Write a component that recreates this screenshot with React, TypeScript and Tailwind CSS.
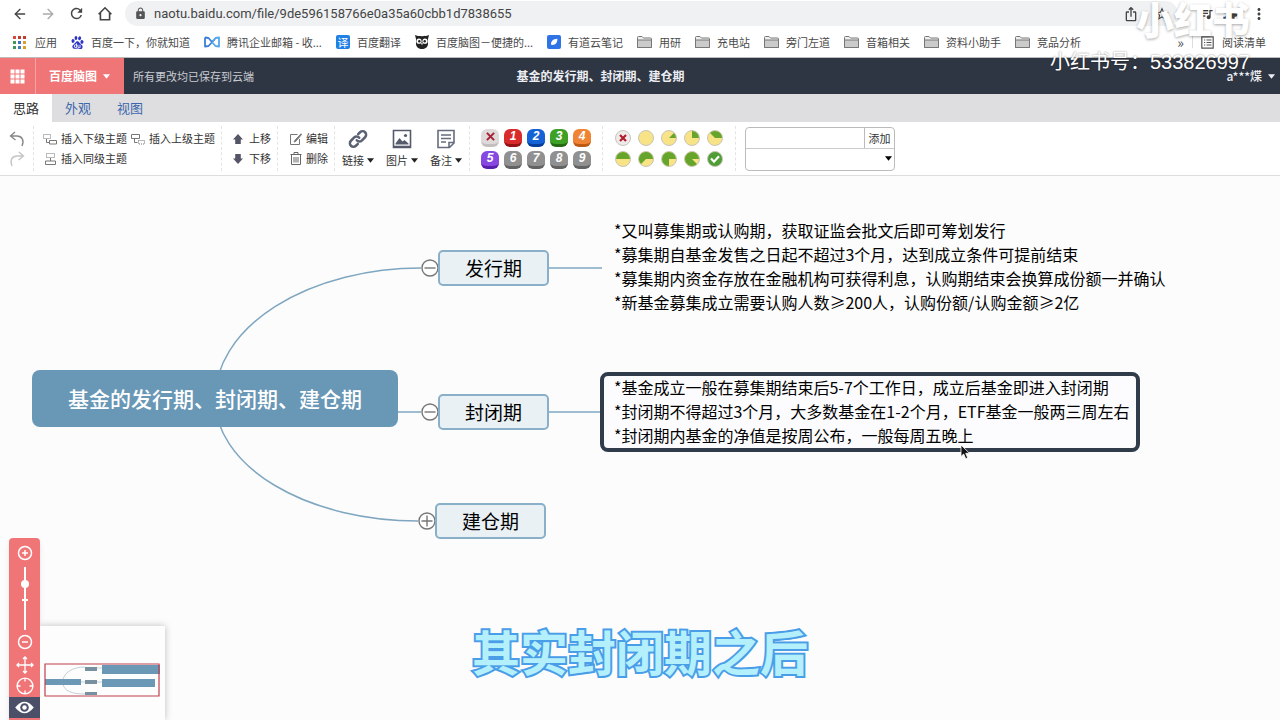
import type { ReactNode } from "react";
import { ArrowLeft, ArrowRight } from "lucide-react";
import { MdLock, MdMoreVert, MdRefresh, MdStarBorder, MdIosShare, MdQueueMusic, MdExtension } from "react-icons/md";
import { SiBaidu } from "react-icons/si";
import { clsx } from "clsx";

/* ---------- small drawings ---------- */

function Caret({ className }: { className?: string }) {
  return (
    <svg viewBox="0 0 8 5" className={clsx("w-[7px] h-[5px] shrink-0", className)} fill="currentColor">
      <path d="M0 0h8L4 5z" />
    </svg>
  );
}

function HomeIcon() {
  return (
    <svg viewBox="0 0 16 16" className="size-4" fill="none" stroke="currentColor" strokeWidth="1.6">
      <path d="M1.6 8.2 8 1.8l6.4 6.4M3.4 6.8v7h9.2v-7" />
    </svg>
  );
}

function AppsIcon() {
  const colors = ["#d9483b", "#c23b30", "#c23b30", "#3f9a55", "#3b72c8", "#d8a12c", "#3f9a55", "#3f7fb0", "#d8a12c"];
  return (
    <svg viewBox="0 0 13 13" className="size-[13px] mr-[2px]">
      {colors.map((c, i) => (
        <rect key={i} x={(i % 3) * 5} y={Math.floor(i / 3) * 5} width="3" height="3" fill={c} />
      ))}
    </svg>
  );
}

function MailIcon() {
  return (
    <svg viewBox="0 0 16 12" className="w-4 h-3" fill="none" strokeWidth="1.8" strokeLinejoin="round">
      <path d="M1 1.5v9L4.5 10 11 3" stroke="#3c7fd6" />
      <path d="M15 10.5v-9L11.5 2 8 6l3.5 4z" stroke="#56a6ea" />
      <path d="M1 1.5 4.5 2 8 6" stroke="#3c7fd6" />
    </svg>
  );
}

function OwlIcon() {
  return (
    <svg viewBox="0 0 14 14" className="size-[14px]">
      <path d="M0 0c3 1.6 11 1.6 14 0l-1 4v5c0 3-3 5-6 5s-6-2-6-5V4z" fill="#222" />
      <circle cx="4" cy="6.2" r="2.6" fill="#fff" />
      <circle cx="10" cy="6.2" r="2.6" fill="#fff" />
      <circle cx="4.3" cy="6.2" r="1.2" fill="#222" />
      <circle cx="9.7" cy="6.2" r="1.2" fill="#222" />
      <path d="M6 8h2l-1 2.6z" fill="#ddd" />
    </svg>
  );
}

function NoteIcon() {
  return (
    <svg viewBox="0 0 14 14" className="size-[14px]">
      <rect width="14" height="14" rx="2" fill="#2f74e6" />
      <path d="M4 9.8C3.6 6.5 6 4 10.4 3.8 10.4 8 8.5 10.4 4 9.8z" fill="#fff" />
    </svg>
  );
}

function FolderIcon() {
  return (
    <svg viewBox="0 0 15 12" className="w-[15px] h-3" stroke="#777" strokeWidth="1">
      <path d="M.5 11.5V1.5q0-1 1-1H5L6.500 2h7q1 0 1 1v8.500z" fill="#eee" />
      <path d="M.5 11.5V4h14v7.500z" fill="#cbcbcb" />
    </svg>
  );
}

function ListIcon() {
  return (
    <svg viewBox="0 0 13 13" className="size-[13px]" fill="none" stroke="#555" strokeWidth="1.2">
      <path d="M.8.8h11.4v11.4H.8zM3 4h1.2M5.500 4h5M3 6.500h1.200M5.500 6.500h5M3 9h1.200M5.500 9h5" />
    </svg>
  );
}

/* ---------- browser chrome ---------- */

const bookmarks: { label: string; icon: ReactNode }[] = [
  { label: "应用", icon: <AppsIcon /> },
  { label: "百度一下，你就知道", icon: <SiBaidu className="size-[13px] text-[#2d35c4]" /> },
  { label: "腾讯企业邮箱 - 收...", icon: <MailIcon /> },
  {
    label: "百度翻译",
    icon: <span className="size-[14px] rounded-xs bg-[#2080e4] text-white text-[11px] leading-[14px] text-center">译</span>,
  },
  { label: "百度脑图－便捷的...", icon: <OwlIcon /> },
  { label: "有道云笔记", icon: <NoteIcon /> },
  { label: "用研", icon: <FolderIcon /> },
  { label: "充电站", icon: <FolderIcon /> },
  { label: "旁门左道", icon: <FolderIcon /> },
  { label: "音箱相关", icon: <FolderIcon /> },
  { label: "资料小助手", icon: <FolderIcon /> },
  { label: "竞品分析", icon: <FolderIcon /> },
];

function BrowserBar() {
  return (
    <header className="bg-white">
      <div className="flex items-center h-[27px] px-3 text-[#444]">
        <div className="flex items-center gap-3 w-[113px]">
          <button aria-label="后退"><ArrowLeft className="size-4" /></button>
          <button aria-label="前进" className="text-[#aaa]"><ArrowRight className="size-4" /></button>
          <button aria-label="刷新"><MdRefresh className="size-[17px]" /></button>
          <button aria-label="主页"><HomeIcon /></button>
        </div>
        <div className="flex flex-1 items-center h-[25px] rounded-full bg-[#eff1f3] pl-[9px] pr-2 gap-[7px]">
          <MdLock className="size-[13px] text-[#555]" />
          <input
            aria-label="地址"
            defaultValue="naotu.baidu.com/file/9de596158766e0a35a60cbb1d7838655"
            className="flex-1 bg-transparent outline-none font-['Roboto'] text-[13px] text-[#444]"
          />
          <MdIosShare className="size-4" />
          <MdStarBorder className="size-4 ml-2" />
        </div>
        <MdQueueMusic className="size-4 ml-5" />
        <MdExtension className="size-4 ml-2" />
        <button aria-label="菜单" className="ml-3"><MdMoreVert className="size-[18px]" /></button>
      </div>
      <nav className="flex items-center h-[31px] pl-[13px] pr-[14px] text-[11px] text-[#4a4a4a] border-b border-[#bbb]">
        <ul className="flex items-center gap-[14px]">
          {bookmarks.map((b) => (
            <li key={b.label}>
              <a href="#" className="flex items-center gap-[7px] whitespace-nowrap">
                {b.icon}
                {b.label}
              </a>
            </li>
          ))}
        </ul>
        <button aria-label="更多书签" className="ml-auto text-[14px] leading-4">»</button>
        <span className="w-px h-3 bg-[#ddd] mx-2" />
        <button className="flex items-center gap-2 whitespace-nowrap">
          <ListIcon />
          阅读清单
        </button>
      </nav>
    </header>
  );
}

/* ---------- editor header ---------- */

function TitleBar() {
  return (
    <div className="flex items-center h-9 bg-[#2f3643] text-white">
      <div className="flex flex-1 items-center h-full">
        <button aria-label="我的文档" className="flex items-center justify-center w-[35px] h-full bg-[#f07577]">
          <svg viewBox="0 0 15 15" className="size-[15px]" fill="#fff">
            {[0, 1, 2, 3, 4, 5, 6, 7, 8].map((i) => (
              <rect key={i} x={(i % 3) * 5 + 0.5} y={Math.floor(i / 3) * 5 + 0.5} width="4" height="4" />
            ))}
          </svg>
        </button>
        <button className="flex items-center gap-[6px] h-full pl-[13px] pr-[14px] border-l border-[#f6a5a6] bg-[#f07577] text-[12px] font-bold">
          百度脑图
          <Caret className="mt-px" />
        </button>
        <span className="pl-[9px] text-[11px] text-[#c9ccd2]">所有更改均已保存到云端</span>
      </div>
      <h1 className="pr-[74px] text-[12px] font-bold text-[#eceef4]">基金的发行期、封闭期、建仓期</h1>
      <div className="flex flex-1 justify-end pr-[5px]">
        <button className="flex items-center gap-[6px] text-[12px] font-medium text-[#eceef4]">
          a***煠
          <Caret />
        </button>
      </div>
    </div>
  );
}

function Tabs() {
  return (
    <div className="flex h-7 bg-[#dedee0] text-[13px] text-[#3d66ac]">
      <button className="px-[13px] bg-white text-[#333]">思路</button>
      <button className="px-[13px]">外观</button>
      <button className="px-[13px]">视图</button>
    </div>
  );
}

/* ---------- toolbar ---------- */

function Divider() {
  return <span className="self-stretch my-1 border-l border-dashed border-[#e3e3e3]" />;
}

function ToolButton({ icon, label }: { icon: ReactNode; label: string }) {
  return (
    <button className="flex items-center gap-1 h-5 whitespace-nowrap">
      {icon}
      {label}
    </button>
  );
}

function InsertIcon({ kind }: { kind: "child" | "parent" | "sibling" }) {
  return (
    <svg viewBox="0 0 14 12" className="w-[14px] h-3 shrink-0" fill="none" stroke="#777" strokeWidth="1">
      {kind === "child" && (
        <>
          <path d="M.5 1.500h7v4h-7z" strokeDasharray="1 1" />
          <path d="M3.500 6v3.500h3M6.500 7.500h7v3.500h-7z" />
        </>
      )}
      {kind === "parent" && (
        <>
          <path d="M.5 1.500h8v4h-8zM3.500 5.500v4h3" />
          <path d="M7.500 7.500h6v3.500h-6z" strokeDasharray="1 1" />
        </>
      )}
      {kind === "sibling" && (
        <>
          <path d="M3.500.5h8v4h-8z" strokeDasharray="1 1" />
          <path d="M7.500 5v3M2.500 8h10v3.500h-10z" />
        </>
      )}
    </svg>
  );
}

function BlockArrow({ down }: { down?: boolean }) {
  return (
    <svg viewBox="0 0 10 10" className={clsx("size-[10px] mr-[2px]", down && "rotate-180")} fill="#555568">
      <path d="M5 0l5 5.500H7.800V10H2.200V5.500H0z" />
    </svg>
  );
}

function UndoArrow({ redo }: { redo?: boolean }) {
  return (
    <svg
      viewBox="0 0 16 16"
      className={clsx("size-4", redo && "-scale-x-100")}
      fill="none"
      stroke={redo ? "#c6c6c6" : "#888"}
      strokeWidth="1.4"
    >
      <path d="M6 1 1.500 5 6.500 9M1.500 5H8c5 0 7.500 4.500 5 10" />
    </svg>
  );
}

function EditIcon() {
  return (
    <svg viewBox="0 0 12 12" className="size-3" fill="none" stroke="#777" strokeWidth="1">
      <path d="M7.500 1.500h-7v10h9V6" />
      <path d="M11 .8 5 7.200 4 9l1.800-.8L11.600 1.500z" fill="#777" />
    </svg>
  );
}

function TrashIcon() {
  return (
    <svg viewBox="0 0 12 13" className="w-3 h-[13px]" fill="none" stroke="#666" strokeWidth="1">
      <path d="M.5 2.500h11M4 2.500v-2h4v2M1.500 3v9.500h9V3M4 5v5.500M6 5v5.500M8 5v5.500" />
    </svg>
  );
}

function LinkIcon() {
  return (
    <svg viewBox="0 0 24 24" className="size-5" fill="none" stroke="#5b6274" strokeWidth="3" strokeLinecap="round">
      <path d="M10.500 13.500a4 4 0 0 0 6 .4l4-4a4.200 4.200 0 0 0-6-6l-2.300 2.300" />
      <path d="M13.500 10.500a4 4 0 0 0-6-.4l-4 4a4.200 4.200 0 0 0 6 6l2.300-2.300" />
    </svg>
  );
}

function ImageIcon() {
  return (
    <svg viewBox="0 0 20 20" className="size-5" fill="none" stroke="#555b6b" strokeWidth="1.6">
      <path d="M1.500 1.500h17v17h-17z" />
      <path d="M3.500 14.500 7.500 9l3 3.500 2-1.500 4 3.500v1h-13z" fill="#555b6b" stroke="none" />
      <circle cx="13.500" cy="6.500" r="1.600" fill="#555b6b" stroke="none" />
      <path d="M1.500 17.500h17" />
    </svg>
  );
}

function MemoIcon() {
  return (
    <svg viewBox="0 0 20 20" className="size-5" fill="none" stroke="#666c7e" strokeWidth="1.6">
      <path d="M2 1.500h16V14l-4.500 4.500H2zM18 13.500h-5v5M5 6h10M5 9.500h10M5 13h5" />
    </svg>
  );
}

function MenuTool({ icon, label }: { icon: ReactNode; label: string }) {
  return (
    <button className="flex flex-col items-center w-8 gap-[3px]">
      {icon}
      <span className="flex items-center gap-[3px] leading-4 whitespace-nowrap">
        {label}
        <Caret className="text-[#222]" />
      </span>
    </button>
  );
}

const priorities = [
  { label: "×", className: "bg-[#dedada] border-[#c4bfbf] text-[#a81e34]" },
  { label: "1", className: "bg-[#d92b2b] border-[#951515] text-white" },
  { label: "2", className: "bg-[#1462d6] border-[#073d98] text-white" },
  { label: "3", className: "bg-[#3fa026] border-[#236a12] text-white" },
  { label: "4", className: "bg-[#ef8534] border-[#bb5a12] text-white" },
  { label: "5", className: "bg-[#8648e0] border-[#5820aa] text-white" },
  { label: "6", className: "bg-[#909090] border-[#636363] text-white" },
  { label: "7", className: "bg-[#909090] border-[#636363] text-white" },
  { label: "8", className: "bg-[#909090] border-[#636363] text-white" },
  { label: "9", className: "bg-[#909090] border-[#636363] text-white" },
];

function PriorityPicker() {
  return (
    <div className="grid grid-cols-5 gap-x-[5px] gap-y-1">
      {priorities.map((p, i) => (
        <button
          key={p.label}
          aria-label={i === 0 ? "移除优先级" : `优先级${i}`}
          className={clsx(
            "flex items-center justify-center size-[18px] rounded-md border-b-3 font-['Liberation_Sans'] text-[12px] font-bold italic leading-3",
            p.className
          )}
        >
          {i === 0 ? (
            <svg viewBox="0 0 10 10" className="size-[9px]" stroke="currentColor" strokeWidth="2.2">
              <path d="M1 1l8 8M9 1 1 9" />
            </svg>
          ) : (
            p.label
          )}
        </button>
      ))}
    </div>
  );
}

// green slice of step/8, always ending at three o'clock
function wedge(step: number) {
  const a = (-step * Math.PI) / 4;
  const x = 9 + 7 * Math.cos(a);
  const y = 9 + 7 * Math.sin(a);
  return `M9 9L${x} ${y}A7 7 0 ${step > 4 ? 1 : 0} 1 16 9z`;
}

function ProgressPicker() {
  return (
    <div className="grid grid-cols-5 gap-x-[5px] gap-y-[3px]">
      {[-1, 0, 1, 2, 3, 4, 5, 6, 7, 8].map((step) => (
        <button key={step} aria-label={step < 0 ? "移除进度" : `完成 ${step}/8`} className="size-[18px]">
          <svg viewBox="0 0 18 18" className="size-[18px]">
            <circle cx="9" cy="9" r="7.5" fill={step < 0 ? "#efebeb" : step === 8 ? "#4f9e35" : "#f8e386"} stroke="#c9c4b8" />
            {step > 0 && step < 8 && <path d={wedge(step)} fill="#66a52c" />}
            {step < 0 && <path d="M6 6l6 6M12 6l-6 6" stroke="#b01c2e" strokeWidth="2.2" />}
            {step === 8 && <path d="M5 8.500l3 3.200 5-5.500" fill="none" stroke="#fff" strokeWidth="2.2" />}
          </svg>
        </button>
      ))}
    </div>
  );
}

function ResourceBox() {
  return (
    <div className="w-[150px] h-11 rounded border border-[#bbb] bg-white">
      <div className="flex h-[21px] border-b border-[#ccc]">
        <input aria-label="资源标签" className="min-w-0 flex-1 px-1 outline-none" />
        <button className="w-[30px] border-l border-[#bbb] leading-4">添加</button>
      </div>
      <div className="flex items-center h-5 pr-[2px]">
        <select aria-label="已有标签" className="flex-1 appearance-none bg-transparent outline-none" />
        <Caret className="text-black" />
      </div>
    </div>
  );
}

function Toolbar() {
  return (
    <div className="flex items-center h-[54px] pl-[9px] bg-white border-b border-[#ddd] text-[11px] text-[#333]">
      <div className="flex flex-col gap-1 pr-2">
        <button aria-label="撤销"><UndoArrow /></button>
        <button aria-label="重做"><UndoArrow redo /></button>
      </div>
      <Divider />
      <div className="grid grid-cols-[auto_auto] gap-x-1 pl-[9px] pr-[6px]">
        <ToolButton icon={<InsertIcon kind="child" />} label="插入下级主题" />
        <ToolButton icon={<InsertIcon kind="parent" />} label="插入上级主题" />
        <ToolButton icon={<InsertIcon kind="sibling" />} label="插入同级主题" />
      </div>
      <Divider />
      <div className="flex flex-col pl-[11px] pr-[6px]">
        <ToolButton icon={<BlockArrow />} label="上移" />
        <ToolButton icon={<BlockArrow down />} label="下移" />
      </div>
      <Divider />
      <div className="flex flex-col pl-3 pr-[6px]">
        <ToolButton icon={<EditIcon />} label="编辑" />
        <ToolButton icon={<TrashIcon />} label="删除" />
      </div>
      <Divider />
      <div className="flex gap-3 pl-[7px] pr-[7px]">
        <MenuTool icon={<LinkIcon />} label="链接" />
        <MenuTool icon={<ImageIcon />} label="图片" />
        <MenuTool icon={<MemoIcon />} label="备注" />
      </div>
      <Divider />
      <div className="px-[11px]"><PriorityPicker /></div>
      <Divider />
      <div className="px-[11px]"><ProgressPicker /></div>
      <Divider />
      <div className="pl-[9px]"><ResourceBox /></div>
    </div>
  );
}

/* ---------- mind map ---------- */

function Branch({ label, className }: { label: string; className: string }) {
  return (
    <div
      className={clsx(
        "absolute flex items-center justify-center w-[111px] h-9 rounded-[5px] border-2 border-[#8aafc9] bg-[#e9f1f5] text-[19px] text-black",
        className
      )}
    >
      {label}
    </div>
  );
}

function Toggle({ open, className }: { open?: boolean; className: string }) {
  return (
    <button aria-label={open ? "收起" : "展开"} className={clsx("absolute size-[18px]", className)}>
      <svg viewBox="0 0 18 18" className="size-[18px]" fill="#fff" stroke="#777" strokeWidth="1.4">
        <circle cx="9" cy="9" r="8" />
        <path d={open ? "M3.500 9h11" : "M3.500 9h11M9 3.500v11"} />
      </svg>
    </button>
  );
}

function MindMap() {
  return (
    <>
      <svg className="absolute top-0 left-0 w-[620px] h-[400px]" fill="none" stroke="#7fa6c0" strokeWidth="1.5">
        <path d="M215 223A206 131 0 0 1 421 92" />
        <path d="M215 223A203 122 0 0 0 418 345" />
        <path d="M390 236H421M548 236H602M548 92H602" />
      </svg>
      <div className="absolute left-8 top-[194px] flex items-center justify-center w-[366px] h-[57px] rounded-lg bg-[#6997b6] text-white text-[21px] font-medium">
        基金的发行期、封闭期、建仓期
      </div>

      <Toggle open className="left-[421px] top-[83px]" />
      <Branch label="发行期" className="left-[438px] top-[74px]" />
      <div className="absolute left-[614px] top-[42px] text-[16px] leading-6 whitespace-nowrap">
        <p>*又叫募集期或认购期，获取证监会批文后即可筹划发行</p>
        <p>*募集期自基金发售之日起不超过3个月，达到成立条件可提前结束</p>
        <p>*募集期内资金存放在金融机构可获得利息，认购期结束会换算成份额一并确认</p>
        <p>*新基金募集成立需要认购人数≥200人，认购份额/认购金额≥2亿</p>
      </div>

      <Toggle open className="left-[421px] top-[227px]" />
      <Branch label="封闭期" className="left-[438px] top-[218px]" />
      <div className="absolute left-[600px] top-[196px] flex flex-col justify-end w-[540px] h-20 px-[10px] pb-px rounded-lg border-4 border-[#303c4a] bg-[#fcfcfe] text-[16px] leading-6 whitespace-nowrap">
        <p>*基金成立一般在募集期结束后5-7个工作日，成立后基金即进入封闭期</p>
        <p>*封闭期不得超过3个月，大多数基金在1-2个月，ETF基金一般两三周左右</p>
        <p>*封闭期内基金的净值是按周公布，一般每周五晚上</p>
      </div>

      <Toggle className="left-[418px] top-[336px]" />
      <Branch label="建仓期" className="left-[435px] top-[327px]" />

      <svg viewBox="0 0 10 16" className="absolute left-[960px] top-[268px] w-[10px] h-4" fill="#111" stroke="#fff" strokeWidth=".8">
        <path d="M1 1v11.500l2.700-2.500 2 4.700 2-.9-2-4.500H9.500z" />
      </svg>
    </>
  );
}

function Navigator() {
  return (
    <div className="absolute left-[9px] bottom-0 flex items-end">
      <div className="flex flex-col items-center w-[31px] h-[182px] pt-[7px] rounded-t bg-[#f07577] shadow-md text-white">
        <button aria-label="放大">
          <svg viewBox="0 0 16 16" className="size-4" fill="none" stroke="#fff" strokeWidth="1.5">
            <circle cx="8" cy="8" r="6.5" />
            <path d="M5 8h6M8 5v6" />
          </svg>
        </button>
        <div className="relative w-[10px] h-[63px] mt-[6px] mb-1">
          <span className="absolute inset-y-0 left-1 w-[2px] bg-white" />
          <span className="absolute top-8 left-[2px] w-[6px] h-[2px] bg-white" />
          <input
            type="range"
            aria-label="缩放"
            min={0}
            max={100}
            defaultValue={24}
            className="absolute inset-0 w-[10px] h-[63px] appearance-none bg-transparent [writing-mode:vertical-lr] [&::-webkit-slider-thumb]:appearance-none [&::-webkit-slider-thumb]:size-2 [&::-webkit-slider-thumb]:rounded-full [&::-webkit-slider-thumb]:bg-white"
          />
        </div>
        <button aria-label="缩小">
          <svg viewBox="0 0 16 16" className="size-4" fill="none" stroke="#fff" strokeWidth="1.5">
            <circle cx="8" cy="8" r="6.5" />
            <path d="M5 8h6" />
          </svg>
        </button>
        <button aria-label="拖动" className="mt-[6px]">
          <svg viewBox="0 0 18 18" className="size-[18px]" fill="none" stroke="#fff" strokeWidth="1.3">
            <path d="M9 1v16M1 9h16M7 3l2-2 2 2M7 15l2 2 2-2M3 7 1 9l2 2M15 7l2 2-2 2" />
          </svg>
        </button>
        <button aria-label="定位根节点" className="mt-[3px]">
          <svg viewBox="0 0 20 20" className="size-[18px]" fill="none" stroke="#fff" strokeWidth="1.5">
            <circle cx="10" cy="10" r="8.8" />
            <path d="M10 1v4M10 15v4M1 10h4M15 10h4" />
          </svg>
        </button>
        <button aria-label="导航器" className="flex items-center justify-center w-full h-[21px] mt-[2px] bg-[#4b5068]">
          <svg viewBox="0 0 20 14" className="w-[19px] h-[13px]">
            <path d="M0 7Q10-5.500 20 7 10 19.500 0 7z" fill="#fff" />
            <circle cx="10" cy="7" r="4.6" fill="#4b5068" />
            <circle cx="10" cy="7" r="2.4" fill="#fff" />
          </svg>
        </button>
      </div>
      <div className="w-[125px] h-[94px] bg-[#fdfdfd] shadow-[0_0_7px_rgba(0,0,0,0.25)] [clip-path:inset(-9px_-9px_0_0)]">
        <svg viewBox="0 0 125 94" className="w-[125px] h-[94px]">
          <g fill="none" stroke="#c3d0d8">
            <path d="M23 54c1-7 9-13 22-13M23 58c1 7 9 10 22 10M40 56h5M57 56h5M57 42h5" />
          </g>
          <path d="M5 53h36v6H5z" fill="#6b98b5" />
          <path d="M45 41h12v4H45zM45 54h12v4H45zM45 66h12v3H45z" fill="#78909f" />
          <path d="M62 39h58v9H62zM62 53h53v8H62z" fill="#6b98b5" />
          <path d="M5 38h114v32H5z" fill="none" stroke="#c0404e" strokeWidth="1.2" />
        </svg>
      </div>
    </div>
  );
}

export default function App() {
  return (
    <div className="relative flex flex-col min-h-screen overflow-hidden bg-[#fcfcfc] font-['Noto_Sans_CJK_SC',sans-serif] text-black">
      <BrowserBar />
      <TitleBar />
      <Tabs />
      <Toolbar />
      <main className="relative flex-1 min-h-[544px]">
        <MindMap />
        <Navigator />
        <p className="absolute inset-x-0 bottom-[34px] text-center text-[48px] leading-[72px] font-bold text-[#b4effc] [-webkit-text-stroke:4px_#4a9ee8] [paint-order:stroke_fill]">
          其实封闭期之后
        </p>
      </main>

      {/* video watermark */}
      <div className="absolute right-[30px] -top-3 flex flex-col items-end text-white pointer-events-none">
        <span className="text-[38px] leading-[60px] font-black [text-shadow:0_1px_3px_rgba(0,0,0,0.35)]">小红书</span>
        <span className="font-['Liberation_Sans','Noto_Sans_CJK_SC',sans-serif] text-[20px] leading-7 [text-shadow:0_0_2px_rgba(0,0,0,0.5)]">
          小红书号：533826997
        </span>
      </div>
    </div>
  );
}
